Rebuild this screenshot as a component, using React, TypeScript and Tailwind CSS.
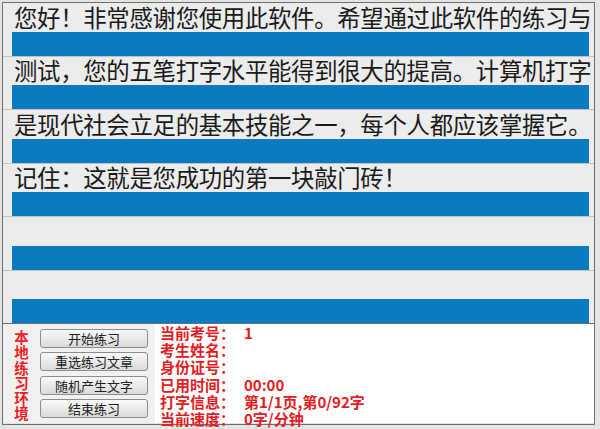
import React from "react";

const lines = [
  "您好！非常感谢您使用此软件。希望通过此软件的练习与",
  "测试，您的五笔打字水平能得到很大的提高。计算机打字",
  "是现代社会立足的基本技能之一，每个人都应该掌握它。",
  "记住：这就是您成功的第一块敲门砖！",
  "",
  "",
];

const buttons = ["开始练习", "重选练习文章", "随机产生文字", "结束练习"];

const info: [string, string][] = [
  ["当前考号：", "1"],
  ["考生姓名：", ""],
  ["身份证号：", ""],
  ["已用时间：", "00:00"],
  ["打字信息：", "第1/1页,第0/92字"],
  ["当前速度：", "0字/分钟"],
];

const cjk = { fontFamily: '"Noto Sans CJK SC", "Liberation Sans", sans-serif' };

export default function App() {
  return (
    <div className="w-[600px] h-[429px] bg-[#e4e4e4] pt-[2px] pl-[2px]" style={cjk}>
      <div className="w-[593px] h-[423px] border border-[#6e6e6e] flex flex-col">
        {/* typing rows */}
        <div className="h-[320px] flex flex-col bg-[#ececec]">
          {lines.map((t, i) => (
            <div
              key={i}
              className={`flex-1 flex flex-col ${i < lines.length - 1 ? "border-b border-[#c2c2c2]" : ""}`}
            >
              <div className="flex-1 flex items-center pl-[11px] text-[23.4px] tracking-[-0.3px] leading-none text-[#1a1a1a] whitespace-nowrap">
                {t}
              </div>
              <div className="h-[24px] ml-[9px] mr-[5px] bg-[#0b7bc1]" />
            </div>
          ))}
        </div>

        {/* control panel */}
        <div className="h-[100px] border-t border-[#6e6e6e] flex">
          <div className="w-[152px] bg-[#f1f1f1] flex pt-[5px]">
            <div className="w-[37px] flex flex-col items-center text-[14.5px] leading-[15.3px] font-bold text-[#ee1c24]">
              {"本地练习环境".split("").map((c) => (
                <span key={c}>{c}</span>
              ))}
            </div>
            <div className="w-[108px] flex flex-col gap-[4.3px]">
              {buttons.map((b) => (
                <button
                  key={b}
                  className="h-[19px] w-full rounded-[3px] border border-[#8c8c8c] bg-gradient-to-b from-[#fafafa] to-[#dadada] text-[13px] leading-none text-[#202020]"
                >
                  {b}
                </button>
              ))}
            </div>
          </div>
          <div className="flex-1 bg-white pl-[5px] text-[15px] leading-[17.2px] font-bold text-[#e41b23]">
            {info.map(([k, v]) => (
              <div key={k} className="flex whitespace-nowrap">
                <span className="w-[84px]">{k}</span>
                <span>{v}</span>
              </div>
            ))}
          </div>
        </div>
      </div>
    </div>
  );
}
